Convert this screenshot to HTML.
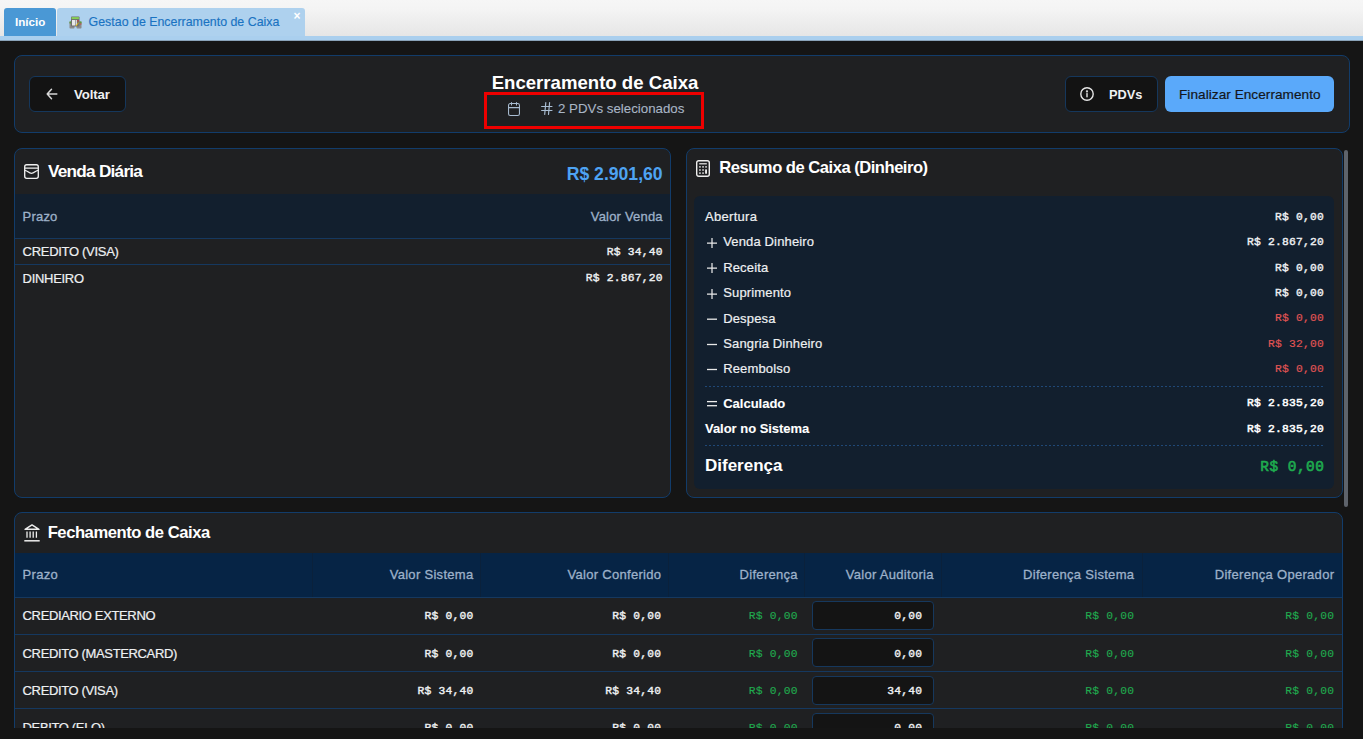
<!DOCTYPE html>
<html><head><meta charset="utf-8">
<style>
*{box-sizing:border-box;margin:0;padding:0}
html,body{width:1363px;height:739px;overflow:hidden;background:#151515;font-family:"Liberation Sans",sans-serif;color:#fff}
.a{position:absolute}
.t{position:absolute;line-height:1;white-space:pre}
.panel{position:absolute;background:#1f2022;border:1px solid #123c6a;border-radius:8px}
.btn{position:absolute;background:#131313;border:1px solid #15375c;border-radius:6px}
.hl{position:absolute;height:1px;background:#15385f}
.dot{position:absolute;height:1px;background:repeating-linear-gradient(90deg,#1f4877 0 2px,transparent 2px 4px)}
svg{position:absolute;overflow:visible}
</style></head><body>
<div class="a" style="left:0;top:0;width:1363px;height:36px;background:linear-gradient(#f6f6f6 0%,#f4f4f4 25%,#e6e6e6 100%)"></div>
<div class="a" style="left:0;top:36px;width:1363px;height:5px;background:#aacfee"></div>
<div class="a" style="left:0;top:40px;width:1363px;height:1px;background:#8aa3b8"></div>
<div class="a" style="left:4px;top:8px;width:52px;height:28px;background:#4a98d5;border-radius:3px 3px 0 0"></div>
<div class="a" style="left:57px;top:8px;width:248px;height:28px;background:#aed1ee;border-radius:3px 3px 0 0"></div>
<div class="t" style="left:15px;top:16.38px;font-size:11.6px;color:#fff;font-weight:bold;font-family:'Liberation Sans',sans-serif;">Início</div>
<div class="t" style="left:88.6px;top:16.30px;font-size:12.4px;color:#1a73c2;font-family:'Liberation Sans',sans-serif;-webkit-text-stroke:0.15px #1a73c2;">Gestao de Encerramento de Caixa</div>
<div class="t" style="left:293.5px;top:9.64px;font-size:12px;color:#fff;font-weight:bold;font-family:'Liberation Sans',sans-serif;">×</div>
<svg style="left:69px;top:16px" width="13" height="13" viewBox="0 0 13 13">
<rect x="0.5" y="5.5" width="5" height="7" rx="0.8" fill="#8a8a8a"/><rect x="7.5" y="5.5" width="5" height="7" rx="0.8" fill="#8a8a8a"/>
<rect x="0.5" y="5.5" width="2" height="2" fill="#5d9c3a"/><rect x="10.5" y="5.5" width="2" height="2" fill="#5d9c3a"/>
<rect x="2" y="0.5" width="8.5" height="10" rx="0.8" fill="#6f6f6f"/><rect x="2.6" y="1.1" width="7.3" height="2" fill="#86cf55"/>
<rect x="3" y="4" width="3" height="5.5" fill="#e8e8e8"/><rect x="6.5" y="4" width="1.5" height="5.5" fill="#d8d8d8"/>
<rect x="8.2" y="4" width="1.6" height="1.6" fill="#b84a46"/><circle cx="11.8" cy="8" r="0.8" fill="#c0504d"/><path d="M7 10 L9.6 6.6" stroke="#e6b800" stroke-width="1"/>
</svg>
<div class="panel" style="left:14px;top:55px;width:1336px;height:78px"></div>
<div class="btn" style="left:29px;top:76px;width:97px;height:36px"></div>
<svg style="left:46px;top:88px" width="12" height="12" viewBox="0 0 12 12" fill="none" stroke="#d8d8d8" stroke-width="1.5" stroke-linecap="round" stroke-linejoin="round"><path d="M1.2 6H10.8M1.2 6L5.5 1.3M1.2 6L5.5 10.7"/></svg>
<div class="t" style="left:74px;top:88.43px;font-size:13.2px;color:#eef0f2;font-weight:bold;font-family:'Liberation Sans',sans-serif;letter-spacing:-0.1px;">Voltar</div>
<div class="t" style="left:295px;width:600px;text-align:center;top:74.46px;font-size:18.6px;color:#fff;font-weight:bold;font-family:'Liberation Sans',sans-serif;">Encerramento de Caixa</div>
<svg style="left:508px;top:101px" width="12" height="15" viewBox="0 0 12 15" fill="none" stroke="#a9bdd2" stroke-width="1.05" stroke-linecap="round"><rect x="0.55" y="2.5" width="10.9" height="12" rx="1.8"/><path d="M0.55 6.6H11.45M3.5 1.5V4M8.5 1.5V4"/></svg>
<svg style="left:541px;top:102px" width="12" height="13" viewBox="0 0 12 13" fill="none" stroke="#a9bdd2" stroke-width="1.15" stroke-linecap="round"><path d="M0.6 4.5H11M0.6 8.5H11M4.8 0.6L3.7 12.4M8.6 0.6L7.5 12.4"/></svg>
<div class="t" style="left:558px;top:102.34px;font-size:13.3px;color:#a9b6c6;font-family:'Liberation Sans',sans-serif;-webkit-text-stroke:0.1px #a9b6c6;">2 PDVs selecionados</div>
<div class="a" style="left:484px;top:92px;width:220px;height:37px;border:3px solid #ee0000"></div>
<div class="btn" style="left:1065px;top:76px;width:93px;height:36px"></div>
<svg style="left:1080px;top:87px" width="14" height="14" viewBox="0 0 14 14" fill="none" stroke="#e6e6e6" stroke-width="1.4" stroke-linecap="round"><circle cx="7" cy="7" r="6.2"/><path d="M7 6.6V9.8"/><circle cx="7" cy="4.4" r="0.4" fill="#e6e6e6"/></svg>
<div class="t" style="left:1109px;top:88.76px;font-size:12.8px;color:#eef0f2;font-weight:bold;font-family:'Liberation Sans',sans-serif;">PDVs</div>
<div class="a" style="left:1165px;top:76px;width:169px;height:36px;background:#5aa9fa;border-radius:6px"></div>
<div class="t" style="left:1179px;top:88.09px;font-size:13.6px;color:#14171b;font-family:'Liberation Sans',sans-serif;letter-spacing:0.05px;-webkit-text-stroke:0.2px #14171b;">Finalizar Encerramento</div>
<div class="panel" style="left:14px;top:148px;width:657px;height:350px"></div>
<svg style="left:23.8px;top:164px" width="15" height="15" viewBox="0 0 15 15" fill="none" stroke="#eee" stroke-width="1.35" stroke-linejoin="round"><rect x="0.7" y="0.7" width="13.6" height="13.6" rx="2"/><path d="M0.7 4.1H14.3M0.7 6.3C3.3 6.3 4.7 9.4 7.5 9.4S11.7 6.3 14.3 6.3"/></svg>
<div class="t" style="left:48px;top:163.24px;font-size:17.2px;color:#fff;font-weight:bold;font-family:'Liberation Sans',sans-serif;letter-spacing:-0.75px;">Venda Diária</div>
<div class="t" style="right:700.40px;top:165.70px;font-size:17.6px;color:#4ea3f3;font-weight:bold;font-family:'Liberation Sans',sans-serif;">R$ 2.901,60</div>
<div class="a" style="left:15px;top:194px;width:655px;height:44px;background:#121f2e"></div>
<div class="hl" style="left:15px;top:238px;width:655px"></div>
<div class="t" style="left:22.6px;top:210.20px;font-size:13px;color:#9db1c9;font-family:'Liberation Sans',sans-serif;letter-spacing:0.2px;-webkit-text-stroke:0.3px #9db1c9;">Prazo</div>
<div class="t" style="right:700.20px;top:210.20px;font-size:13px;color:#9db1c9;font-family:'Liberation Sans',sans-serif;letter-spacing:0.2px;-webkit-text-stroke:0.3px #9db1c9;">Valor Venda</div>
<div class="t" style="left:22.6px;top:245.00px;font-size:13px;color:#eef0f2;font-family:'Liberation Sans',sans-serif;letter-spacing:-0.3px;-webkit-text-stroke:0.2px #eef0f2;">CREDITO (VISA)</div>
<div class="t" style="right:700.18px;top:246.84px;font-size:11.3px;color:#eef0f2;font-family:'Liberation Mono',monospace;letter-spacing:0.22px;-webkit-text-stroke:0.4px #eef0f2;">R$ 34,40</div>
<div class="hl" style="left:15px;top:264px;width:655px"></div>
<div class="t" style="left:22.6px;top:271.60px;font-size:13px;color:#eef0f2;font-family:'Liberation Sans',sans-serif;letter-spacing:-0.3px;-webkit-text-stroke:0.2px #eef0f2;">DINHEIRO</div>
<div class="t" style="right:700.18px;top:273.44px;font-size:11.3px;color:#eef0f2;font-family:'Liberation Mono',monospace;letter-spacing:0.22px;-webkit-text-stroke:0.4px #eef0f2;">R$ 2.867,20</div>
<div class="panel" style="left:686px;top:148px;width:657px;height:350px"></div>
<svg style="left:696px;top:160.3px" width="14" height="17" viewBox="0 0 14 17" fill="none" stroke="#eee" stroke-width="1.4"><rect x="0.7" y="0.7" width="12.6" height="15.6" rx="2"/><path d="M3.2 3.8H10.8" stroke-width="1.2"/>
<g fill="#eee" stroke="none"><rect x="3" y="6.3" width="1.9" height="1.2"/><rect x="6.1" y="6.3" width="1.9" height="1.2"/><rect x="9.1" y="6.3" width="1.9" height="1.2"/><rect x="3" y="9.4" width="1.9" height="1.2"/><rect x="6.1" y="9.4" width="1.9" height="1.2"/><rect x="3" y="12.5" width="1.9" height="1.2"/><rect x="6.1" y="12.5" width="1.9" height="1.2"/><rect x="9.1" y="9.4" width="1.9" height="4.3"/></g></svg>
<div class="t" style="left:719.3px;top:160.15px;font-size:16.6px;color:#fff;font-weight:bold;font-family:'Liberation Sans',sans-serif;letter-spacing:-0.5px;">Resumo de Caixa (Dinheiro)</div>
<div class="a" style="left:694px;top:196px;width:640px;height:293px;background:#121f2e;border-radius:6px"></div>
<div class="t" style="left:705px;top:210.10px;font-size:13px;color:#eef0f2;font-family:'Liberation Sans',sans-serif;letter-spacing:0.3px;-webkit-text-stroke:0.2px #eef0f2;">Abertura</div>
<div class="t" style="right:38.98px;top:211.94px;font-size:11.3px;color:#eef0f2;font-family:'Liberation Mono',monospace;letter-spacing:0.22px;-webkit-text-stroke:0.4px #eef0f2;">R$ 0,00</div>
<svg style="left:707px;top:237.8px" width="10" height="10" viewBox="0 0 10 10" stroke="#e8e8e8" stroke-width="1.25"><path d="M0 5H10M5 0V10"/></svg>
<div class="t" style="left:723.2px;top:235.30px;font-size:13px;color:#eef0f2;font-family:'Liberation Sans',sans-serif;letter-spacing:0.15px;-webkit-text-stroke:0.2px #eef0f2;">Venda Dinheiro</div>
<div class="t" style="right:38.98px;top:237.14px;font-size:11.3px;color:#eef0f2;font-family:'Liberation Mono',monospace;letter-spacing:0.22px;-webkit-text-stroke:0.4px #eef0f2;">R$ 2.867,20</div>
<svg style="left:707px;top:263.3px" width="10" height="10" viewBox="0 0 10 10" stroke="#e8e8e8" stroke-width="1.25"><path d="M0 5H10M5 0V10"/></svg>
<div class="t" style="left:723.2px;top:260.80px;font-size:13px;color:#eef0f2;font-family:'Liberation Sans',sans-serif;letter-spacing:0.15px;-webkit-text-stroke:0.2px #eef0f2;">Receita</div>
<div class="t" style="right:38.98px;top:262.64px;font-size:11.3px;color:#eef0f2;font-family:'Liberation Mono',monospace;letter-spacing:0.22px;-webkit-text-stroke:0.4px #eef0f2;">R$ 0,00</div>
<svg style="left:707px;top:288.6px" width="10" height="10" viewBox="0 0 10 10" stroke="#e8e8e8" stroke-width="1.25"><path d="M0 5H10M5 0V10"/></svg>
<div class="t" style="left:723.2px;top:286.10px;font-size:13px;color:#eef0f2;font-family:'Liberation Sans',sans-serif;letter-spacing:0.15px;-webkit-text-stroke:0.2px #eef0f2;">Suprimento</div>
<div class="t" style="right:38.98px;top:287.94px;font-size:11.3px;color:#eef0f2;font-family:'Liberation Mono',monospace;letter-spacing:0.22px;-webkit-text-stroke:0.4px #eef0f2;">R$ 0,00</div>
<svg style="left:707px;top:317px" width="10" height="4"><rect x="0" y="1.55" width="10" height="1.3" fill="#e8e8e8"/></svg>
<div class="t" style="left:723.2px;top:311.50px;font-size:13px;color:#eef0f2;font-family:'Liberation Sans',sans-serif;letter-spacing:0.15px;-webkit-text-stroke:0.2px #eef0f2;">Despesa</div>
<div class="t" style="right:38.98px;top:313.34px;font-size:11.3px;color:#e25555;font-family:'Liberation Mono',monospace;letter-spacing:0.22px;-webkit-text-stroke:0.15px #e25555;">R$ 0,00</div>
<svg style="left:707px;top:342px" width="10" height="4"><rect x="0" y="1.85" width="10" height="1.3" fill="#e8e8e8"/></svg>
<div class="t" style="left:723.2px;top:336.90px;font-size:13px;color:#eef0f2;font-family:'Liberation Sans',sans-serif;letter-spacing:0.15px;-webkit-text-stroke:0.2px #eef0f2;">Sangria Dinheiro</div>
<div class="t" style="right:38.98px;top:338.74px;font-size:11.3px;color:#e25555;font-family:'Liberation Mono',monospace;letter-spacing:0.22px;-webkit-text-stroke:0.15px #e25555;">R$ 32,00</div>
<svg style="left:707px;top:367px" width="10" height="4"><rect x="0" y="1.85" width="10" height="1.3" fill="#e8e8e8"/></svg>
<div class="t" style="left:723.2px;top:362.30px;font-size:13px;color:#eef0f2;font-family:'Liberation Sans',sans-serif;letter-spacing:0.15px;-webkit-text-stroke:0.2px #eef0f2;">Reembolso</div>
<div class="t" style="right:38.98px;top:364.14px;font-size:11.3px;color:#e25555;font-family:'Liberation Mono',monospace;letter-spacing:0.22px;-webkit-text-stroke:0.15px #e25555;">R$ 0,00</div>
<div class="dot" style="left:705px;top:386px;width:619px"></div>
<svg style="left:707px;top:400px" width="10" height="8"><rect x="0" y="0.95" width="10" height="1.3" fill="#eee"/><rect x="0" y="5.05" width="10" height="1.3" fill="#eee"/></svg>
<div class="t" style="left:723.2px;top:396.60px;font-size:13px;color:#fff;font-weight:bold;font-family:'Liberation Sans',sans-serif;-webkit-text-stroke:0.1px #fff;">Calculado</div>
<div class="t" style="right:38.98px;top:398.44px;font-size:11.3px;color:#fff;font-family:'Liberation Mono',monospace;letter-spacing:0.22px;-webkit-text-stroke:0.5px #fff;">R$ 2.835,20</div>
<div class="t" style="left:705px;top:422.30px;font-size:13px;color:#fff;font-weight:bold;font-family:'Liberation Sans',sans-serif;letter-spacing:-0.03px;-webkit-text-stroke:0.1px #fff;">Valor no Sistema</div>
<div class="t" style="right:38.98px;top:424.14px;font-size:11.3px;color:#fff;font-family:'Liberation Mono',monospace;letter-spacing:0.22px;-webkit-text-stroke:0.5px #fff;">R$ 2.835,20</div>
<div class="dot" style="left:705px;top:445px;width:619px"></div>
<div class="t" style="left:705px;top:456.71px;font-size:17px;color:#fff;font-weight:bold;font-family:'Liberation Sans',sans-serif;">Diferença</div>
<div class="t" style="right:38.70px;top:459.56px;font-size:14.4px;color:#1fab4f;font-family:'Liberation Mono',monospace;letter-spacing:0.5px;-webkit-text-stroke:0.6px #1fab4f;">R$ 0,00</div>
<div class="a" style="left:1344px;top:150px;width:4px;height:357px;background:#5e636b;border-radius:2px"></div>
<div class="a" style="left:0;top:0;width:1363px;height:728px;overflow:hidden">
<div class="panel" style="left:14px;top:512px;width:1329px;height:300px"></div>
<svg style="left:23.5px;top:524px" width="16" height="18" viewBox="0 0 16 18" fill="none" stroke="#eee"><path d="M1 5.3L8 0.9L15 5.3Z" stroke-width="1.4" stroke-linejoin="round"/><path d="M3 7.5V13.8M6.1 7.5V13.8M9.2 7.5V13.8M12.4 7.5V13.8" stroke-width="1.3"/><path d="M0.3 16.8H15.7" stroke-width="1.5"/></svg>
<div class="t" style="left:47.7px;top:524.95px;font-size:16.6px;color:#fff;font-weight:bold;font-family:'Liberation Sans',sans-serif;letter-spacing:-0.45px;">Fechamento de Caixa</div>
<div class="a" style="left:15px;top:553px;width:1327px;height:44px;background:#062445"></div>
<div class="a" style="left:312px;top:553px;width:1px;height:44px;background:#0a213b"></div>
<div class="a" style="left:480px;top:553px;width:1px;height:44px;background:#0a213b"></div>
<div class="a" style="left:668px;top:553px;width:1px;height:44px;background:#0a213b"></div>
<div class="a" style="left:804px;top:553px;width:1px;height:44px;background:#0a213b"></div>
<div class="a" style="left:941px;top:553px;width:1px;height:44px;background:#0a213b"></div>
<div class="a" style="left:1142px;top:553px;width:1px;height:44px;background:#0a213b"></div>
<div class="hl" style="left:15px;top:597px;width:1327px"></div>
<div class="t" style="left:22.6px;top:567.90px;font-size:13px;color:#9db1c9;font-family:'Liberation Sans',sans-serif;letter-spacing:0.3px;-webkit-text-stroke:0.3px #9db1c9;">Prazo</div>
<div class="t" style="right:889.50px;top:567.90px;font-size:13px;color:#9db1c9;font-family:'Liberation Sans',sans-serif;letter-spacing:0.3px;-webkit-text-stroke:0.3px #9db1c9;">Valor Sistema</div>
<div class="t" style="right:701.70px;top:567.90px;font-size:13px;color:#9db1c9;font-family:'Liberation Sans',sans-serif;letter-spacing:0.3px;-webkit-text-stroke:0.3px #9db1c9;">Valor Conferido</div>
<div class="t" style="right:565.10px;top:567.90px;font-size:13px;color:#9db1c9;font-family:'Liberation Sans',sans-serif;letter-spacing:0.3px;-webkit-text-stroke:0.3px #9db1c9;">Diferença</div>
<div class="t" style="right:429.20px;top:567.90px;font-size:13px;color:#9db1c9;font-family:'Liberation Sans',sans-serif;letter-spacing:0.3px;-webkit-text-stroke:0.3px #9db1c9;">Valor Auditoria</div>
<div class="t" style="right:228.70px;top:567.90px;font-size:13px;color:#9db1c9;font-family:'Liberation Sans',sans-serif;letter-spacing:0.3px;-webkit-text-stroke:0.3px #9db1c9;">Diferença Sistema</div>
<div class="t" style="right:28.70px;top:567.90px;font-size:13px;color:#9db1c9;font-family:'Liberation Sans',sans-serif;letter-spacing:0.3px;-webkit-text-stroke:0.3px #9db1c9;">Diferença Operador</div>
<div class="t" style="left:22.6px;top:608.90px;font-size:13px;color:#eef0f2;font-family:'Liberation Sans',sans-serif;letter-spacing:-0.36px;-webkit-text-stroke:0.2px #eef0f2;">CREDIARIO EXTERNO</div>
<div class="t" style="right:889.58px;top:610.74px;font-size:11.3px;color:#eef0f2;font-family:'Liberation Mono',monospace;letter-spacing:0.22px;-webkit-text-stroke:0.4px #eef0f2;">R$ 0,00</div>
<div class="t" style="right:701.78px;top:610.74px;font-size:11.3px;color:#eef0f2;font-family:'Liberation Mono',monospace;letter-spacing:0.22px;-webkit-text-stroke:0.4px #eef0f2;">R$ 0,00</div>
<div class="t" style="right:565.18px;top:610.74px;font-size:11.3px;color:#1fab4f;font-family:'Liberation Mono',monospace;letter-spacing:0.22px;-webkit-text-stroke:0.12px #1fab4f;">R$ 0,00</div>
<div class="a" style="left:812px;top:601px;width:122px;height:29px;background:#141414;border:1px solid #16385d;border-radius:4px"></div>
<div class="t" style="right:440.78px;top:610.74px;font-size:11.3px;color:#eef0f2;font-family:'Liberation Mono',monospace;letter-spacing:0.22px;-webkit-text-stroke:0.4px #eef0f2;">0,00</div>
<div class="t" style="right:228.78px;top:610.74px;font-size:11.3px;color:#1fab4f;font-family:'Liberation Mono',monospace;letter-spacing:0.22px;-webkit-text-stroke:0.12px #1fab4f;">R$ 0,00</div>
<div class="t" style="right:28.78px;top:610.74px;font-size:11.3px;color:#1fab4f;font-family:'Liberation Mono',monospace;letter-spacing:0.22px;-webkit-text-stroke:0.12px #1fab4f;">R$ 0,00</div>
<div class="hl" style="left:15px;top:634px;width:1327px"></div>
<div class="t" style="left:22.6px;top:646.80px;font-size:13px;color:#eef0f2;font-family:'Liberation Sans',sans-serif;letter-spacing:-0.36px;-webkit-text-stroke:0.2px #eef0f2;">CREDITO (MASTERCARD)</div>
<div class="t" style="right:889.58px;top:648.64px;font-size:11.3px;color:#eef0f2;font-family:'Liberation Mono',monospace;letter-spacing:0.22px;-webkit-text-stroke:0.4px #eef0f2;">R$ 0,00</div>
<div class="t" style="right:701.78px;top:648.64px;font-size:11.3px;color:#eef0f2;font-family:'Liberation Mono',monospace;letter-spacing:0.22px;-webkit-text-stroke:0.4px #eef0f2;">R$ 0,00</div>
<div class="t" style="right:565.18px;top:648.64px;font-size:11.3px;color:#1fab4f;font-family:'Liberation Mono',monospace;letter-spacing:0.22px;-webkit-text-stroke:0.12px #1fab4f;">R$ 0,00</div>
<div class="a" style="left:812px;top:638px;width:122px;height:29px;background:#141414;border:1px solid #16385d;border-radius:4px"></div>
<div class="t" style="right:440.78px;top:648.64px;font-size:11.3px;color:#eef0f2;font-family:'Liberation Mono',monospace;letter-spacing:0.22px;-webkit-text-stroke:0.4px #eef0f2;">0,00</div>
<div class="t" style="right:228.78px;top:648.64px;font-size:11.3px;color:#1fab4f;font-family:'Liberation Mono',monospace;letter-spacing:0.22px;-webkit-text-stroke:0.12px #1fab4f;">R$ 0,00</div>
<div class="t" style="right:28.78px;top:648.64px;font-size:11.3px;color:#1fab4f;font-family:'Liberation Mono',monospace;letter-spacing:0.22px;-webkit-text-stroke:0.12px #1fab4f;">R$ 0,00</div>
<div class="hl" style="left:15px;top:671px;width:1327px"></div>
<div class="t" style="left:22.6px;top:683.90px;font-size:13px;color:#eef0f2;font-family:'Liberation Sans',sans-serif;letter-spacing:-0.36px;-webkit-text-stroke:0.2px #eef0f2;">CREDITO (VISA)</div>
<div class="t" style="right:889.58px;top:685.74px;font-size:11.3px;color:#eef0f2;font-family:'Liberation Mono',monospace;letter-spacing:0.22px;-webkit-text-stroke:0.4px #eef0f2;">R$ 34,40</div>
<div class="t" style="right:701.78px;top:685.74px;font-size:11.3px;color:#eef0f2;font-family:'Liberation Mono',monospace;letter-spacing:0.22px;-webkit-text-stroke:0.4px #eef0f2;">R$ 34,40</div>
<div class="t" style="right:565.18px;top:685.74px;font-size:11.3px;color:#1fab4f;font-family:'Liberation Mono',monospace;letter-spacing:0.22px;-webkit-text-stroke:0.12px #1fab4f;">R$ 0,00</div>
<div class="a" style="left:812px;top:676px;width:122px;height:29px;background:#141414;border:1px solid #16385d;border-radius:4px"></div>
<div class="t" style="right:440.78px;top:685.74px;font-size:11.3px;color:#eef0f2;font-family:'Liberation Mono',monospace;letter-spacing:0.22px;-webkit-text-stroke:0.4px #eef0f2;">34,40</div>
<div class="t" style="right:228.78px;top:685.74px;font-size:11.3px;color:#1fab4f;font-family:'Liberation Mono',monospace;letter-spacing:0.22px;-webkit-text-stroke:0.12px #1fab4f;">R$ 0,00</div>
<div class="t" style="right:28.78px;top:685.74px;font-size:11.3px;color:#1fab4f;font-family:'Liberation Mono',monospace;letter-spacing:0.22px;-webkit-text-stroke:0.12px #1fab4f;">R$ 0,00</div>
<div class="hl" style="left:15px;top:708px;width:1327px"></div>
<div class="t" style="left:22.6px;top:721.00px;font-size:13px;color:#eef0f2;font-family:'Liberation Sans',sans-serif;letter-spacing:-0.36px;-webkit-text-stroke:0.2px #eef0f2;">DEBITO (ELO)</div>
<div class="t" style="right:889.58px;top:722.84px;font-size:11.3px;color:#eef0f2;font-family:'Liberation Mono',monospace;letter-spacing:0.22px;-webkit-text-stroke:0.4px #eef0f2;">R$ 0,00</div>
<div class="t" style="right:701.78px;top:722.84px;font-size:11.3px;color:#eef0f2;font-family:'Liberation Mono',monospace;letter-spacing:0.22px;-webkit-text-stroke:0.4px #eef0f2;">R$ 0,00</div>
<div class="t" style="right:565.18px;top:722.84px;font-size:11.3px;color:#1fab4f;font-family:'Liberation Mono',monospace;letter-spacing:0.22px;-webkit-text-stroke:0.12px #1fab4f;">R$ 0,00</div>
<div class="a" style="left:812px;top:713px;width:122px;height:29px;background:#141414;border:1px solid #16385d;border-radius:4px"></div>
<div class="t" style="right:440.78px;top:722.84px;font-size:11.3px;color:#eef0f2;font-family:'Liberation Mono',monospace;letter-spacing:0.22px;-webkit-text-stroke:0.4px #eef0f2;">0,00</div>
<div class="t" style="right:228.78px;top:722.84px;font-size:11.3px;color:#1fab4f;font-family:'Liberation Mono',monospace;letter-spacing:0.22px;-webkit-text-stroke:0.12px #1fab4f;">R$ 0,00</div>
<div class="t" style="right:28.78px;top:722.84px;font-size:11.3px;color:#1fab4f;font-family:'Liberation Mono',monospace;letter-spacing:0.22px;-webkit-text-stroke:0.12px #1fab4f;">R$ 0,00</div>
</div>
</body></html>
